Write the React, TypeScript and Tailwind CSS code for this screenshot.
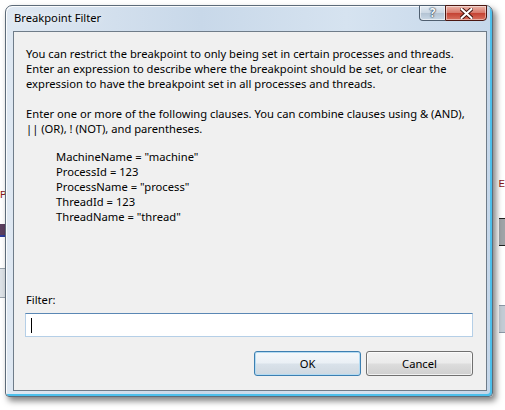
import { type ReactNode } from "react";

const uiFont = { fontFamily: '"Noto Sans", "Open Sans", Arial, sans-serif' };

const clauses = [
  'MachineName = "machine"',
  "ProcessId = 123",
  'ProcessName = "process"',
  "ThreadId = 123",
  'ThreadName = "thread"',
];

function CaptionButtons() {
  return (
    <div className="flex h-[16px] -mt-px">
      <div className="flex w-[26px] items-center justify-center rounded-bl-[4px] border border-r-0 border-[#4f5f70] bg-[linear-gradient(#e3ebf3,#cbd7e3_50%,#b3c3d3_51%,#c9d8e6)] shadow-[inset_0_0_0_1px_rgba(255,255,255,0.55)]">
        <span className="text-[12px] leading-none font-bold text-[#f4f7fa] [text-shadow:0_0_1px_#33475b,0_0_1px_#33475b,0_0_2px_#33475b]">
          ?
        </span>
      </div>
      <div className="flex w-[42px] items-center justify-center rounded-br-[4px] border border-[#4a1712] bg-[linear-gradient(#eab4a8,#d8796b_48%,#c44233_52%,#d8705e)] shadow-[inset_0_0_0_1px_rgba(255,255,255,0.45)]">
        <svg width="13" height="11" viewBox="0 0 13 11">
          <path
            d="M1.5 1 L11.5 10 M11.5 1 L1.5 10"
            stroke="#40100b"
            strokeWidth="4"
            strokeLinecap="round"
          />
          <path
            d="M1.5 1 L11.5 10 M11.5 1 L1.5 10"
            stroke="#ffffff"
            strokeWidth="2.2"
            strokeLinecap="round"
          />
        </svg>
      </div>
    </div>
  );
}

function DialogButton({ children, focused }: { children: ReactNode; focused?: boolean }) {
  return (
    <button
      className={
        focused
          ? "flex h-[25px] w-[107px] items-center justify-center rounded-[3px] border border-[#3c7fb1] bg-[linear-gradient(#f4f8fb,#eaf0f5_48%,#d9e2ea_52%,#cfd8e0)] text-[11.2px] text-black shadow-[inset_0_0_0_1px_#b4dbf2]"
          : "flex h-[25px] w-[107px] items-center justify-center rounded-[3px] border border-[#707070] bg-[linear-gradient(#f2f2f2,#ebebeb_48%,#dddddd_52%,#cfcfcf)] text-[11.2px] text-black shadow-[inset_0_0_0_1px_rgba(255,255,255,0.7)]"
      }
    >
      {children}
    </button>
  );
}

function Backdrop() {
  return (
    <>
      {/* bits of the editor window showing behind the dialog */}
      <div className="absolute left-0 top-[224px] h-[11px] w-[6px] bg-[#5b3f5e]" />
      <div className="absolute left-0 top-[235px] h-[2px] w-[6px] bg-[#2c3c9c]" />
      <div className="absolute left-0 top-[268px] h-[30px] w-[6px] border-y border-[#9aa4ad] bg-[#dde2e7]" />
      <span className="absolute left-0 top-[190px] text-[11px] leading-none text-[#8b1a1a]" style={{ fontFamily: '"Liberation Mono", monospace' }}>
        P
      </span>
      <div className="absolute right-0 top-[218px] h-[28px] w-[6px] border-y border-[#222] bg-[#a0a4a8]" />
      <div className="absolute right-0 top-[305px] h-[28px] w-[6px] border-y border-[#8c98a6] bg-[#c3ccd5]" />
      <span className="absolute right-0 top-[179px] text-[11px] leading-none text-[#8b1a1a]" style={{ fontFamily: '"Liberation Mono", monospace' }}>
        E
      </span>
    </>
  );
}

export default function App() {
  return (
    <div className="relative h-[410px] w-[505px] overflow-hidden bg-white" style={uiFont}>
      <Backdrop />

      <div className="absolute left-[5px] top-[5px] flex h-[392px] w-[488px] flex-col rounded-t-[7px] rounded-b-[4px] border border-[#5d6b79] bg-[linear-gradient(90deg,#dfe8f2,#c8d8e9_40%,#d6e3f0_70%,#c5d7ea)] shadow-[3px_4px_6px_rgba(0,0,0,0.5),inset_1px_1px_0_rgba(255,255,255,0.85),inset_-2px_-2px_0_#4cc0ec]">
        <div className="flex h-[25px] shrink-0 items-start justify-between pl-[8px] pr-[5px]">
          <span className="pt-[4px] text-[11.2px] leading-[15px] text-black [text-shadow:0_0_6px_rgba(255,255,255,0.9)]">
            Breakpoint Filter
          </span>
          <CaptionButtons />
        </div>

        <div className="ml-[7px] flex h-[360px] w-[474px] flex-col border border-[#6f7c89] bg-[#f0f0f0] pl-[12px] pt-[14px] text-[11.2px] leading-[15px] text-black">
          <p className="whitespace-nowrap">
            You can restrict the breakpoint to only being set in certain processes and threads.
            <br />
            Enter an expression to describe where the breakpoint should be set, or clear the
            <br />
            expression to have the breakpoint set in all processes and threads.
          </p>
          <p className="mt-[15px] whitespace-nowrap">
            Enter one or more of the following clauses. You can combine clauses using &amp; (AND),
            <br />
            || (OR), ! (NOT), and parentheses.
          </p>
          <ul className="mt-[13px] pl-[30px]">
            {clauses.map((clause) => (
              <li key={clause} className="whitespace-nowrap">
                {clause}
              </li>
            ))}
          </ul>

          <label className="mt-[68px] block">Filter:</label>
          <div className="mt-[6px] -ml-px flex h-[24px] w-[448px] items-center border border-[#b5cfe7] border-t-[#5a87b4] bg-white pl-[5px]">
            <div className="h-[15px] w-px bg-black" />
          </div>

          <div className="mt-[14px] flex justify-end gap-[5px] pr-[13px]">
            <DialogButton focused>OK</DialogButton>
            <DialogButton>Cancel</DialogButton>
          </div>
        </div>
      </div>
    </div>
  );
}
